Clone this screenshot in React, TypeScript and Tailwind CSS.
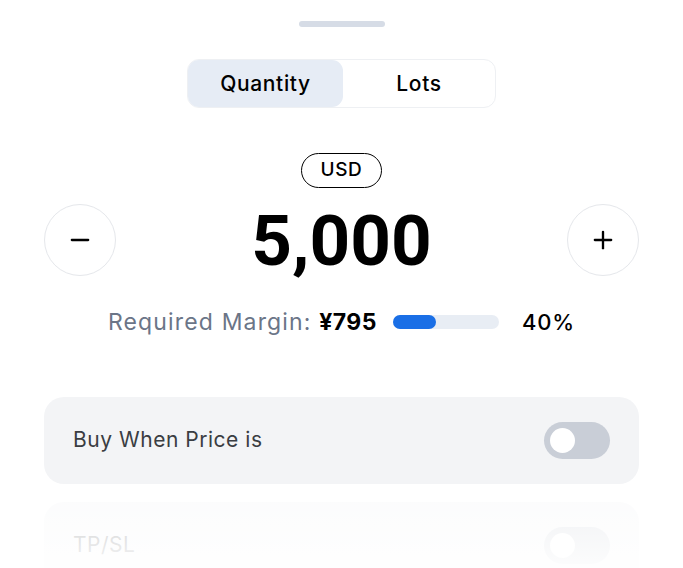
import { Minus, Plus } from 'lucide-react';

type ToggleRowProps = {
  label: string;
};

const ToggleRow = ({ label }: ToggleRowProps) => {
  return (
    <div className="flex h-[87px] items-center justify-between rounded-[20px] bg-[#f3f4f6] px-[29px]">
      <span className="text-[21px] tracking-[0.025em] text-[#3a3d42]">{label}</span>
      <button className="flex h-[37px] w-[66px] items-center rounded-full bg-[#c9ced7] px-[6px]">
        <span className="h-[25px] w-[25px] rounded-full bg-white" />
      </button>
    </div>
  );
};

const App = () => {
  return (
    <main
      className="relative h-[568px] w-[683px] overflow-hidden bg-white"
      style={{ fontFamily: 'Inter, "Noto Sans", sans-serif' }}
    >
      {/* DRAG HANDLE */}
      <div className="flex justify-center pt-[21px]">
        <div className="h-[6px] w-[86px] rounded-full bg-[#d6dce6]" />
      </div>

      {/* MODE SWITCH */}
      <div className="mt-[32px] flex justify-center">
        <div className="flex h-[49px] w-[309px] rounded-[12px] border border-[#eef0f3] bg-white">
          <button className="flex w-[155px] items-center justify-center rounded-[11px] bg-[#e6ecf5] text-[21px] font-medium tracking-[0.03em] text-black">
            Quantity
          </button>
          <button className="flex flex-1 items-center justify-center text-[21px] font-medium tracking-[0.03em] text-black">
            Lots
          </button>
        </div>
      </div>

      {/* CURRENCY */}
      <div className="mt-[45px] flex justify-center">
        <span className="flex h-[35px] w-[81px] items-center justify-center rounded-full border-[1.5px] border-black text-[19px] font-medium tracking-[0.03em] text-black">
          USD
        </span>
      </div>

      {/* AMOUNT */}
      <div className="mt-[16px] flex items-center justify-between px-[44px]">
        <button className="flex h-[72px] w-[72px] items-center justify-center rounded-full border border-[#e5e7eb] bg-white">
          <Minus size={28} strokeWidth={2} className="text-black" />
        </button>
        <span
          className="text-[71px] font-bold leading-none text-black"
          style={{ fontFamily: 'Roboto, Inter, sans-serif' }}
        >
          5,000
        </span>
        <button className="flex h-[72px] w-[72px] items-center justify-center rounded-full border border-[#e5e7eb] bg-white">
          <Plus size={28} strokeWidth={2} className="text-black" />
        </button>
      </div>

      {/* MARGIN */}
      <div className="mt-[29px] flex items-center justify-center gap-[16px]">
        <span className="text-[23px] tracking-[0.05em] text-[#6b7587]">
          Required Margin:{' '}
          <span className="font-bold tracking-[0.02em] text-black">¥795</span>
        </span>
        <div className="h-[14px] w-[106px] rounded-full bg-[#e8edf4]">
          <div className="h-full w-[43px] rounded-full bg-[#1a6fe6]" />
        </div>
        <span className="ml-[7px] text-[22px] font-medium tracking-[0.04em] text-black">40%</span>
      </div>

      {/* OPTIONS */}
      <div className="mt-[57px] flex flex-col gap-[18px] px-[44px]">
        <ToggleRow label="Buy When Price is" />
        <ToggleRow label="TP/SL" />
      </div>

      {/* FADE */}
      <div className="pointer-events-none absolute bottom-0 left-0 h-[80px] w-full bg-gradient-to-b from-white/70 to-white/95" />
    </main>
  );
};

export default App;
